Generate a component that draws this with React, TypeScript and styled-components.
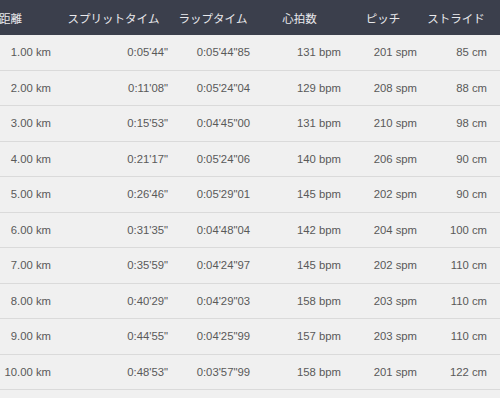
import React from "react";
import styled, { createGlobalStyle } from "styled-components";

const GlobalStyle = createGlobalStyle`
  html, body {
    margin: 0;
    padding: 0;
    background: #f0f0f0;
    overflow: hidden;
  }
  body {
    font-family: "Liberation Sans", Arial, "Noto Sans CJK JP", sans-serif;
  }
`;

const COLUMNS = "89px 117px 82px 91px 76px 70px";

const TableWrap = styled.div`
  width: 530px;
  margin-left: -30px;
`;

const HeaderRow = styled.div`
  display: grid;
  grid-template-columns: ${COLUMNS};
  height: 35px;
  background: #3b3f4c;
`;

const HeaderCell = styled.div`
  display: flex;
  align-items: center;
  justify-content: center;
  padding-right: 8px;
  color: #e9e9ec;
  font-family: "Liberation Sans", "Noto Sans CJK JP", sans-serif;
  font-size: 11.5px;
  white-space: nowrap;
`;

const Row = styled.div`
  display: grid;
  grid-template-columns: ${COLUMNS};
  height: 35.5px;
  box-sizing: border-box;
  border-bottom: 1px solid #dadada;
  background: #f0f0f0;
`;

const Cell = styled.div`
  display: flex;
  align-items: center;
  justify-content: flex-end;
  padding-right: 8px;
  color: #595959;
  font-size: 11.3px;
  white-space: nowrap;
`;

const headers = ["距離", "スプリットタイム", "ラップタイム", "心拍数", "ピッチ", "ストライド"];

const laps = [
  ["1.00 km", "0:05'44\"", "0:05'44\"85", "131 bpm", "201 spm", "85 cm"],
  ["2.00 km", "0:11'08\"", "0:05'24\"04", "129 bpm", "208 spm", "88 cm"],
  ["3.00 km", "0:15'53\"", "0:04'45\"00", "131 bpm", "210 spm", "98 cm"],
  ["4.00 km", "0:21'17\"", "0:05'24\"06", "140 bpm", "206 spm", "90 cm"],
  ["5.00 km", "0:26'46\"", "0:05'29\"01", "145 bpm", "202 spm", "90 cm"],
  ["6.00 km", "0:31'35\"", "0:04'48\"04", "142 bpm", "204 spm", "100 cm"],
  ["7.00 km", "0:35'59\"", "0:04'24\"97", "145 bpm", "202 spm", "110 cm"],
  ["8.00 km", "0:40'29\"", "0:04'29\"03", "158 bpm", "203 spm", "110 cm"],
  ["9.00 km", "0:44'55\"", "0:04'25\"99", "157 bpm", "203 spm", "110 cm"],
  ["10.00 km", "0:48'53\"", "0:03'57\"99", "158 bpm", "201 spm", "122 cm"],
];

const App: React.FC = () => {
  return (
    <>
      <GlobalStyle />
      <TableWrap>
        <HeaderRow>
          {headers.map((h) => (
            <HeaderCell key={h}>{h}</HeaderCell>
          ))}
        </HeaderRow>
        {laps.map((lap) => (
          <Row key={lap[0]}>
            {lap.map((value, i) => (
              <Cell key={i}>{value}</Cell>
            ))}
          </Row>
        ))}
      </TableWrap>
    </>
  );
};

export default App;
